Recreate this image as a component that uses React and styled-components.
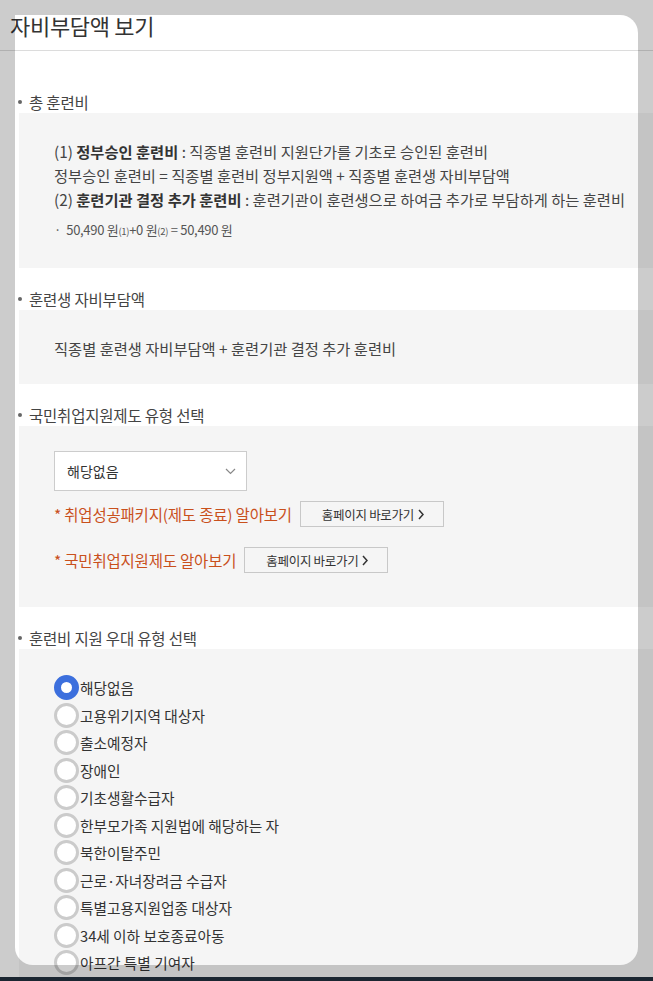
import React from 'react'
import styled, { createGlobalStyle } from 'styled-components'

const GlobalStyle = createGlobalStyle`
  html, body {
    margin: 0;
    padding: 0;
    background: #fff;
  }

  body {
    font-family: 'Noto Sans CJK KR', 'Noto Sans', sans-serif;
    color: #444;
  }
`

const Page = styled.div`
  position: relative;
  height: 981px;
  overflow: hidden;
`

// dim layer with a rounded hole where the popup sits
const Dim = styled.div`
  position: absolute;
  top: 15px;
  left: 15px;
  width: 623px;
  height: 950px;
  border-radius: 0 18px 18px 18px;
  box-shadow: 0 0 0 2000px rgba(0, 0, 0, 0.2);
  pointer-events: none;
  z-index: 5;
`

const BottomBar = styled.div`
  position: absolute;
  left: 0;
  right: 0;
  bottom: 0;
  height: 4px;
  background: #1b2631;
  z-index: 6;
`

const Header = styled.header`
  height: 50px;
  border-bottom: 1px solid #dcdcdc;
  padding-left: 10px;
`

const Title = styled.h1`
  margin: 0;
  font-size: 22px;
  font-weight: 400;
  line-height: 50px;
  color: #333;
  letter-spacing: -0.3px;
`

const Body = styled.div`
  padding-top: 41px;
`

const Section = styled.section`
  & + & {
    margin-top: 21px;
  }
`

const Heading = styled.h2`
  display: flex;
  align-items: center;
  gap: 7px;
  margin: 0 0 1px;
  padding-left: 18px;
  height: 20px;
  font-size: 15.5px;
  font-weight: 400;
  line-height: 20px;
  color: #444;
  letter-spacing: -0.2px;

  &::before {
    content: '';
    width: 4px;
    height: 4px;
    border-radius: 50%;
    background: #666;
  }
`

const Box = styled.div`
  margin-left: 19px;
  background: #f5f5f5;
  padding: ${p => p.$pad || '26px 20px 24px 35px'};
`

const Line = styled.p`
  margin: 0;
  font-size: 15.3px;
  line-height: 24px;
  color: #444;
  white-space: nowrap;

  b {
    font-weight: 700;
    color: #333;
  }
`

const Sum = styled.p`
  margin: 9px 0 0;
  font-size: 13px;
  line-height: 20px;
  color: #555;
  letter-spacing: -0.3px;

  sub {
    font-size: 9.5px;
    vertical-align: baseline;
  }
`

const Select = styled.div`
  display: flex;
  align-items: center;
  justify-content: space-between;
  box-sizing: border-box;
  width: 193px;
  height: 40px;
  padding: 0 10px 0 12px;
  background: #fff;
  border: 1px solid #ccc;
  font-size: 14px;
  color: #333;
`

const LinkRow = styled.div`
  display: flex;
  align-items: center;
  gap: 8px;
  margin-top: ${p => p.$top}px;
`

const LinkText = styled.span`
  font-size: 15.5px;
  color: #c9501c;
  letter-spacing: -0.2px;
`

const GoButton = styled.button`
  display: inline-flex;
  align-items: center;
  gap: 4px;
  height: 26px;
  padding: 0 19px 0 21px;
  background: transparent;
  border: 1px solid #c8c8c8;
  font-family: inherit;
  font-size: 12.5px;
  color: #333;
  letter-spacing: -0.3px;
`

const RadioList = styled.div`
  display: flex;
  flex-direction: column;
`

const RadioRow = styled.label`
  display: flex;
  align-items: center;
  gap: 1px;
  height: 27.5px;
  font-size: 14.7px;
  color: #333;
`

const RadioMark = styled.span`
  box-sizing: border-box;
  width: 25px;
  height: 25px;
  border-radius: 50%;
  background: #fff;
  border: ${p => (p.$on ? '7px solid #3c6fdd' : '3px solid #cbcbcb')};
`

const Chevron = () =>
  <svg width="11" height="7" viewBox="0 0 11 7">
    <polyline points="1,1 5.5,5.5 10,1" fill="none" stroke="#888" strokeWidth="1.2" />
  </svg>

const Arrow = () =>
  <svg width="6" height="11" viewBox="0 0 6 11">
    <polyline points="1,1 5,5.5 1,10" fill="none" stroke="#333" strokeWidth="1.5" />
  </svg>

const types = [
  '해당없음',
  '고용위기지역 대상자',
  '출소예정자',
  '장애인',
  '기초생활수급자',
  '한부모가족 지원법에 해당하는 자',
  '북한이탈주민',
  '근로·자녀장려금 수급자',
  '특별고용지원업종 대상자',
  '34세 이하 보호종료아동',
  '아프간 특별 기여자',
]

const App = () =>
  <Page>
    <GlobalStyle />
    <Header>
      <Title>자비부담액 보기</Title>
    </Header>

    <Body>
      <Section>
        <Heading>총 훈련비</Heading>
        <Box $pad="26px 20px 27px 35px">
          <Line>(1) <b>정부승인 훈련비</b> : 직종별 훈련비 지원단가를 기초로 승인된 훈련비</Line>
          <Line>정부승인 훈련비 = 직종별 훈련비 정부지원액 + 직종별 훈련생 자비부담액</Line>
          <Line>(2) <b>훈련기관 결정 추가 훈련비</b> : 훈련기관이 훈련생으로 하여금 추가로 부담하게 하는 훈련비</Line>
          <Sum>·&nbsp; 50,490 원<sub>(1)</sub>+0 원<sub>(2)</sub> = 50,490 원</Sum>
        </Box>
      </Section>

      <Section>
        <Heading>훈련생 자비부담액</Heading>
        <Box>
          <Line>직종별 훈련생 자비부담액 + 훈련기관 결정 추가 훈련비</Line>
        </Box>
      </Section>

      <Section>
        <Heading>국민취업지원제도 유형 선택</Heading>
        <Box $pad="25px 20px 34px 35px">
          <Select>
            <span>해당없음</span>
            <Chevron />
          </Select>
          <LinkRow $top={10}>
            <LinkText>* 취업성공패키지(제도 종료) 알아보기</LinkText>
            <GoButton>홈페이지 바로가기 <Arrow /></GoButton>
          </LinkRow>
          <LinkRow $top={20}>
            <LinkText>* 국민취업지원제도 알아보기</LinkText>
            <GoButton>홈페이지 바로가기 <Arrow /></GoButton>
          </LinkRow>
        </Box>
      </Section>

      <Section>
        <Heading>훈련비 지원 우대 유형 선택</Heading>
        <Box $pad="25px 20px 30px 35px">
          <RadioList>
            {types.map((t, i) =>
              <RadioRow key={t}>
                <RadioMark $on={i === 0} />
                {t}
              </RadioRow>
            )}
          </RadioList>
        </Box>
      </Section>
    </Body>

    <Dim />
    <BottomBar />
  </Page>

export default App
